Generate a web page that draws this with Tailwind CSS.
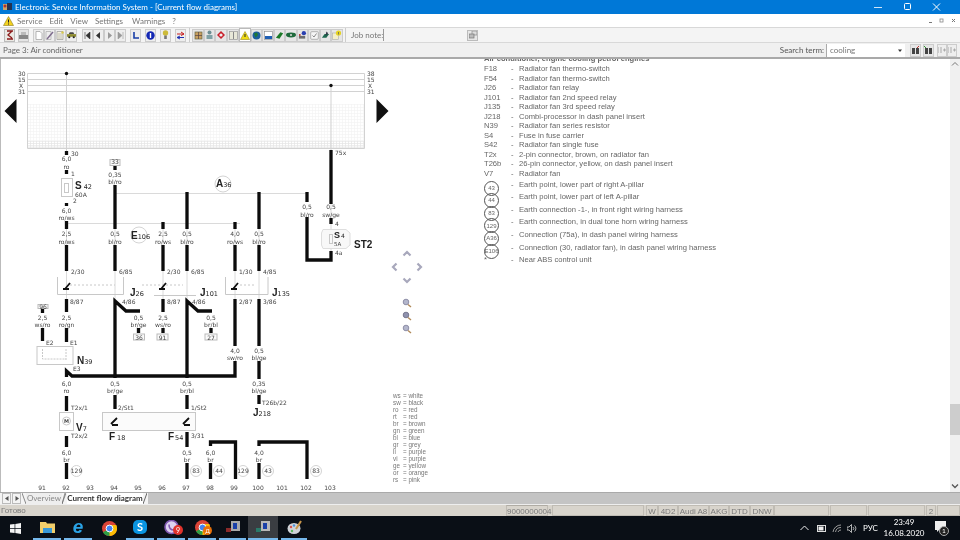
<!DOCTYPE html>
<html lang="en">
<head>
<meta charset="UTF-8">
<title>Electronic Service Information System</title>
<script src="https://cdn.jsdelivr.net/npm/@tailwindcss/browser@4"></script>
</head>
<body class="m-0 overflow-hidden bg-white">
<div class="w-[960px] h-[540px] flex flex-col overflow-hidden font-['Lato',sans-serif] text-[#555] blur-[0.35px]">

  <!-- title bar -->
  <div class="h-[14px] shrink-0 bg-[#0078d7] flex items-center text-white text-[8px]">
    <svg class="ml-[2px] mr-[1px]" width="11" height="10" viewBox="0 0 11 10"><rect x="1" y="2" width="4" height="6" fill="#c9a36a"/><rect x="5" y="1" width="5" height="7" fill="#23324f"/><circle cx="3" cy="4" r="1.5" fill="#a33"/></svg>
    <span class="ml-[1px] flex-1">Electronic Service Information System - [Current flow diagrams]</span>
    <svg width="75" height="14" viewBox="0 0 75 14" class="mr-[11px]"><path d="M0 7.5H8" stroke="#cfe4f7"/><rect x="30.5" y="3.5" width="6" height="6" rx="1" fill="none" stroke="#fff"/><path d="M59 3.5l7 7M66 3.5l-7 7" stroke="#fff"/></svg>
  </div>

  <!-- menu -->
  <div class="h-[13px] shrink-0 bg-white flex items-center text-[8px] text-[#777] relative">
    <svg class="ml-[3px]" width="11" height="10" viewBox="0 0 11 10"><path d="M5.5 .5L10.5 9.5H.5Z" fill="#f4d21f" stroke="#8a7a20" stroke-width=".6"/><path d="M5.5 3.5V6.5M5.5 7.5V8.5" stroke="#222"/></svg>
    <span class="ml-[3px]">Service</span>
    <span class="ml-[7px]">Edit</span>
    <span class="ml-[7px]">View</span>
    <span class="ml-[7px]">Settings</span>
    <span class="ml-[9px]">Warnings</span>
    <span class="ml-[7px]">?</span>
    <svg class="ml-auto mr-[3px]" width="30" height="10" viewBox="0 0 30 10"><path d="M2 6.5H5" stroke="#777"/><rect x="13" y="3" width="3" height="3" fill="none" stroke="#888" stroke-width=".8"/><path d="M25 3l3 3M28 3l-3 3" stroke="#777"/></svg>
  </div>

  <!-- toolbar -->
  <div class="h-[16px] shrink-0 bg-[#f4f4f4] border-t border-[#d8d8d8] border-b flex items-center text-[8px]">
    <div class="ml-[4px] w-[11px] h-[13px] bg-[#ebe9e4] border border-[#bbb] flex items-center justify-center"><svg width="8" height="10" viewBox="0 0 8 10"><path d="M1 1H7M6 1L2 5L6 8M1 9H7" stroke="#8c1a1a" fill="none" stroke-width="1.3"/></svg></div>
    <div class="ml-[3px] w-[11px] h-[13px] bg-[#e5e5e5] border border-[#c8c8c8] flex items-center justify-center"><svg width="9" height="9" viewBox="0 0 9 9"><rect x="2" y="1" width="5" height="3" fill="#bbb"/><rect x="0" y="4" width="9" height="4" fill="#888"/></svg></div>
    <div class="ml-[4px] w-[11px] h-[13px] bg-[#eee] border border-[#ccc] flex items-center justify-center"><svg width="8" height="9" viewBox="0 0 8 9"><path d="M1 .5H5L7 2.5V8.5H1Z" fill="#fff" stroke="#999" stroke-width=".7"/></svg></div>
    <div class="w-[11px] h-[13px] bg-[#eee] border border-[#ccc] flex items-center justify-center"><svg width="9" height="9" viewBox="0 0 9 9"><path d="M1 .5H6V8.5H1Z" fill="#eee" stroke="#aaa" stroke-width=".7"/><path d="M2 8L8 1" stroke="#7d6a8c" stroke-width="1.4"/></svg></div>
    <div class="w-[11px] h-[13px] bg-[#eee] border border-[#ccc] flex items-center justify-center"><svg width="9" height="9" viewBox="0 0 9 9"><path d="M1 .5H7V8.5H1Z" fill="#f4f1df" stroke="#999" stroke-width=".7"/><path d="M2 3H6M2 5H6M2 7H6" stroke="#aaa" stroke-width=".7"/><circle cx="6.5" cy="1.5" r="1.2" fill="#d9c94e"/></svg></div>
    <div class="w-[11px] h-[13px] bg-[#eee] border border-[#ccc] flex items-center justify-center"><svg width="10" height="8" viewBox="0 0 10 8"><rect x="0" y="3" width="10" height="3" fill="#8c8a2e"/><path d="M2 3L3 1H7L8 3" fill="#444"/><circle cx="2.5" cy="6.5" r="1.2" fill="#222"/><circle cx="7.5" cy="6.5" r="1.2" fill="#222"/></svg></div>

    <div class="ml-[5px] w-[11px] h-[13px] bg-[#eee] border border-[#ccc] flex items-center justify-center"><svg width="7" height="7" viewBox="0 0 7 7"><path d="M1 0V7M6 0V7L2 3.5Z" fill="#333" stroke="#333" stroke-width=".6"/></svg></div>
    <div class="w-[11px] h-[13px] bg-[#eee] border border-[#ccc] flex items-center justify-center"><svg width="7" height="7" viewBox="0 0 7 7"><path d="M5 0V7L1 3.5Z" fill="#333"/></svg></div>
    <div class="w-[11px] h-[13px] bg-[#eee] border border-[#ccc] flex items-center justify-center"><svg width="7" height="7" viewBox="0 0 7 7"><path d="M2 0V7L6 3.5Z" fill="#999"/></svg></div>
    <div class="w-[11px] h-[13px] bg-[#eee] border border-[#ccc] flex items-center justify-center"><svg width="7" height="7" viewBox="0 0 7 7"><path d="M6 0V7M1 0V7L5 3.5Z" fill="#999" stroke="#999" stroke-width=".6"/></svg></div>

    <div class="ml-[4px] w-[11px] h-[13px] bg-[#eee] border border-[#ccc] flex items-center justify-center"><svg width="9" height="9" viewBox="0 0 9 9"><path d="M3 1V7H8" fill="none" stroke="#1a3fa8" stroke-width="1.6"/></svg></div>
    <div class="ml-[4px] w-[11px] h-[13px] bg-[#eee] border border-[#ccc] flex items-center justify-center"><svg width="9" height="9" viewBox="0 0 9 9"><circle cx="4.5" cy="4.5" r="4.2" fill="#1428b4"/><path d="M4.5 2V7" stroke="#fff" stroke-width="1.4"/></svg></div>
    <div class="ml-[4px] w-[11px] h-[13px] bg-[#eee] border border-[#ccc] flex items-center justify-center"><svg width="7" height="10" viewBox="0 0 7 10"><circle cx="3.5" cy="3" r="2.7" fill="#cdbb3a"/><rect x="2.2" y="5.5" width="2.6" height="3.5" fill="#777"/></svg></div>
    <div class="ml-[4px] w-[11px] h-[13px] bg-[#eee] border border-[#ccc] flex items-center justify-center"><svg width="9" height="9" viewBox="0 0 9 9"><path d="M1 3H8M5 1L8 3L5 4.5" stroke="#c81e1e" fill="none"/><path d="M8 6.5H1M4 5L1 6.5L4 8" stroke="#2030b0" fill="none"/></svg></div>

    <div class="ml-[3px] w-[2px] h-[14px] border-l border-[#ccc]"></div>
    <div class="ml-[1px] w-[12px] h-[13px] bg-[#e6e6e6] border border-[#ccc] flex items-center justify-center"><svg width="9" height="9" viewBox="0 0 9 9"><rect x="1" y="1" width="7" height="7" fill="#c9a060" stroke="#664" stroke-width=".7"/><path d="M1 4.5H8M4.5 1V8" stroke="#544" stroke-width=".7"/></svg></div>
    <div class="w-[11px] h-[13px] bg-[#e6e6e6] border border-[#ccc] flex items-center justify-center"><svg width="9" height="10" viewBox="0 0 9 10"><circle cx="4.5" cy="2.5" r="2" fill="#6d8f93"/><rect x="1.5" y="5" width="6" height="4" fill="#7fa2a6"/></svg></div>
    <div class="w-[12px] h-[13px] bg-[#e6e6e6] border border-[#ccc] flex items-center justify-center"><svg width="10" height="9" viewBox="0 0 10 9"><path d="M1 4L5 0L9 4L5 8Z" fill="#c81e2a"/><circle cx="5" cy="4" r="1.6" fill="#eee"/></svg></div>
    <div class="w-[12px] h-[13px] bg-[#e6e6e6] border border-[#ccc] flex items-center justify-center"><svg width="9" height="9" viewBox="0 0 9 9"><rect x=".5" y=".5" width="8" height="8" fill="#e8e8d8" stroke="#999" stroke-width=".7"/><path d="M4.5 1V8" stroke="#888"/></svg></div>
    <div class="w-[12px] h-[14px] bg-white border border-[#bbb] flex items-center justify-center"><svg width="10" height="9" viewBox="0 0 10 9"><path d="M5 .5L9.5 8.5H.5Z" fill="#f0dc14" stroke="#9a8a20" stroke-width=".6"/><path d="M5 3V6" stroke="#222"/></svg></div>
    <div class="w-[11px] h-[13px] bg-[#e6e6e6] border border-[#ccc] flex items-center justify-center"><svg width="9" height="9" viewBox="0 0 9 9"><circle cx="4.5" cy="4.5" r="4" fill="#1c5f9c"/><path d="M2 2.5L5 1.5L6 4L3.5 6.5Z" fill="#1f7a33"/></svg></div>
    <div class="w-[12px] h-[13px] bg-[#e6e6e6] border border-[#ccc] flex items-center justify-center"><svg width="9" height="9" viewBox="0 0 9 9"><rect x=".5" y=".5" width="8" height="8" fill="#fff" stroke="#888" stroke-width=".6"/><rect x="1" y="5" width="7" height="3" fill="#1f5fb4"/></svg></div>
    <div class="w-[11px] h-[13px] bg-[#e6e6e6] border border-[#ccc] flex items-center justify-center"><svg width="10" height="9" viewBox="0 0 10 9"><path d="M1 7L6 1L9 2L5 8Z" fill="#1c7a28"/></svg></div>
    <div class="w-[12px] h-[13px] bg-[#e6e6e6] border border-[#ccc] flex items-center justify-center"><svg width="10" height="6" viewBox="0 0 10 6"><ellipse cx="5" cy="3" rx="5" ry="2.4" fill="#1f6a3c"/><circle cx="5" cy="3" r="1" fill="#ddd"/></svg></div>
    <div class="w-[11px] h-[13px] bg-[#e6e6e6] border border-[#ccc] flex items-center justify-center"><svg width="10" height="10" viewBox="0 0 10 10"><circle cx="6.5" cy="3" r="2.4" fill="#2a3fb0"/><rect x="1" y="6" width="7" height="3" fill="#6d6d6d"/><circle cx="2" cy="5" r="1" fill="#b02a2a"/></svg></div>
    <div class="w-[12px] h-[13px] bg-[#e6e6e6] border border-[#ccc] flex items-center justify-center"><svg width="9" height="9" viewBox="0 0 9 9"><rect x=".7" y=".7" width="7.6" height="7.6" rx="1" fill="#f5f5f5" stroke="#999" stroke-width=".7"/><path d="M2.5 4.5L4 6L6.5 2.5" stroke="#888" fill="none"/></svg></div>
    <div class="w-[11px] h-[13px] bg-[#e6e6e6] border border-[#ccc] flex items-center justify-center"><svg width="10" height="10" viewBox="0 0 10 10"><path d="M1 8L4 4H9L6 8Z" fill="#1f6a50"/><path d="M6 1L8 3L5 6Z" fill="#334"/></svg></div>
    <div class="w-[12px] h-[13px] bg-[#e6e6e6] border border-[#ccc] flex items-center justify-center"><svg width="10" height="10" viewBox="0 0 10 10"><rect x=".5" y="3" width="6" height="6.5" fill="#f4efc9" stroke="#aaa" stroke-width=".6"/><circle cx="6.5" cy="3" r="2.6" fill="#e6d320"/><path d="M6.5 2V4.5" stroke="#665" stroke-width=".8"/></svg></div>

    <div class="ml-[2px] w-[2px] h-[14px] border-l border-[#ccc]"></div>
    <span class="ml-[4px] w-[31px] whitespace-nowrap text-[#777]">Job note:</span>
    <div class="ml-[1px] w-px h-[12px] bg-[#999]"></div>
    <div class="ml-auto mr-[482px] w-[11px] h-[11px] bg-[#e6e6e6] border border-[#bbb] flex items-center justify-center"><svg width="8" height="8" viewBox="0 0 8 8"><rect x="3" y="0" width="5" height="4" fill="#ddd" stroke="#888" stroke-width=".7"/><rect x="0" y="3" width="5" height="4" fill="#bbb" stroke="#777" stroke-width=".7"/></svg></div>
  </div>

  <!-- page strip -->
  <div class="h-[16px] shrink-0 bg-[#f0f0f0] border-b-2 border-[#a9a9a9] flex items-center text-[8px] text-[#666]">
    <span class="ml-[3px]">Page 3: Air conditioner</span>
    <span class="ml-auto text-[#555]">Search term:</span>
    <div class="ml-[2px] w-[79px] h-[13px] bg-white border-l border-[#aaa] flex items-center justify-between">
      <span class="ml-[3px] text-[#777]">cooling</span>
      <svg class="mr-[2px]" width="6" height="6" viewBox="0 0 6 6"><path d="M1 2.5H5L3 5Z" fill="#333"/></svg>
    </div>
    <div class="ml-[5px] w-[11px] h-[13px] bg-[#e6e6e6] border border-[#ccc] flex items-center justify-center"><svg width="9" height="9" viewBox="0 0 9 9"><rect x="1" y="2" width="3" height="6" fill="#444"/><rect x="5" y="2" width="3" height="6" fill="#444"/><path d="M6 2L8 0" stroke="#b33"/></svg></div>
    <div class="ml-[2px] w-[11px] h-[13px] bg-[#e6e6e6] border border-[#ccc] flex items-center justify-center"><svg width="9" height="9" viewBox="0 0 9 9"><rect x="1" y="2" width="3" height="6" fill="#444"/><rect x="5" y="2" width="3" height="6" fill="#444"/><path d="M2 2L0 0" stroke="#393"/></svg></div>
    <div class="ml-[3px] w-[10px] h-[13px] bg-[#eee] border border-[#ccc] flex items-center justify-center"><svg width="8" height="8" viewBox="0 0 8 8"><path d="M3 1V7M5 4H8M6.5 2.5V5.5M0 1V7" stroke="#aaa" fill="none"/></svg></div>
    <div class="mr-[3px] w-[10px] h-[13px] bg-[#eee] border border-[#ccc] flex items-center justify-center"><svg width="8" height="8" viewBox="0 0 8 8"><path d="M3 1V7M5 4H8M6.5 2.5V5.5M0 1V7" stroke="#aaa" fill="none"/></svg></div>
  </div>

  <!-- main -->
  <div class="flex-1 min-h-0 flex bg-white border-l border-[#bbb]">
    <svg class="shrink-0 w-[473px] h-[432px] font-['DejaVu_Sans',sans-serif]" viewBox="1 60 473 432">
      <defs>
        <pattern id="dots" width="3" height="3" patternUnits="userSpaceOnUse"><path d="M0 .5H3M.5 0V3" stroke="#f2f2f2" stroke-width=".6"/></pattern>
        <pattern id="dots-dense" width="3" height="2" patternUnits="userSpaceOnUse"><path d="M0 .5H3M.5 0V2" stroke="#e4e4e4" stroke-width=".6"/></pattern>
      </defs>

      <!-- bus area -->
      <rect x="28" y="105" width="336" height="44" fill="url(#dots)"/>
      <rect x="28" y="142" width="336" height="7" fill="url(#dots-dense)"/>
      <path d="M27.5 74.5H364.5V149.5H27.5ZM28 80.5H364M28 86.5H364M28 92.5H364" fill="none" stroke="#d2d2d2"/>
      <path d="M66.5 75V152M331 87V152" stroke="#d2d2d2"/>
      <circle cx="66.5" cy="74.5" r="1.7" fill="#111"/>
      <circle cx="331" cy="86.5" r="1.7" fill="#111"/>
      <g font-size="6" fill="#444">
        <text x="18" y="77">30</text><text x="18" y="83">15</text><text x="19" y="89">X</text><text x="18" y="95">31</text>
        <text x="367" y="77">38</text><text x="367" y="83">15</text><text x="368" y="89">X</text><text x="367" y="95">31</text>
      </g>

      <!-- page arrows -->
      <path d="M16.5 100V124L4.5 112Z M376.5 100V124L388.5 112Z" fill="#111"/>

      <!-- thin lines -->
      <path d="M115 194.5H307M66.5 224.5H240M66.5 230V300M115 230V300M163 230V300M187 230V300M235 230V300M259 230V300M331 205V252" stroke="#dadada" fill="none"/>

      <!-- heavy wires -->
      <g stroke="#0c0c0c" stroke-width="3.3" fill="none" stroke-linejoin="miter">
        <path d="M66.5 152V156M66.5 171V175M66.5 204V207M66.5 222V230M66.5 246V272"/>
        <path d="M115 166V171M115 186V230M115 246V272"/>
        <path d="M163 223V230M163 246V272M187 193V230M187 246V272"/>
        <path d="M235 223V230M235 246V272M259 193V230M259 246V272"/>
        <path d="M307 193V203M307 218V261H331V252M331 151V205M331 219V225"/>
        <path d="M66.5 300V313M66.5 329V343M42.5 310V314M42.5 329V342"/>
        <path d="M66.5 378V372L72 377H235V362M115 379V302L126 312H140M187 379V302L198 312H212"/>
        <path d="M138.5 329V334M163 300V313M163 329V334M211 329V334"/>
        <path d="M235 300V347M259 300V347M259 362V380M259 396V405"/>
        <path d="M66.5 397V412M66.5 437V448M66.5 464V480"/>
        <path d="M115 396V410M187 396V410M187 433V448M187 464V480"/>
        <path d="M210.5 464V480M235.5 480V443H210.5V447M259 464V480M307 480V443H259V447"/>
      </g>

      <!-- fuses and component boxes -->
      <g fill="none" stroke="#c8c8c8">
        <rect x="61.5" y="179.5" width="11" height="18"/><rect x="64.5" y="184.5" width="4" height="9"/>
        <path d="M323 230.5H346L350 234V246L346 249.5H323L321.5 246V234Z" fill="#f8f8f8" stroke="#dedede"/>
        <rect x="329.5" y="235.5" width="3" height="9"/>
        <path d="M57.5 278V295.5H123.5V278M154 296.5H196M225.5 278V295.5H268V278"/>
        <path d="M70 286H115M142 286H183M240 286H255" stroke-dasharray="2 2"/>
        <rect x="37" y="347.5" width="36" height="18"/>
        <path d="M42.5 350V360H66M66 350V362" stroke-dasharray="2 1"/>
        <rect x="59.5" y="413.5" width="14" height="18"/>
        <circle cx="66.5" cy="422" r="4"/>
        <rect x="102.5" y="413.5" width="93" height="18" fill="#fbfbfb"/>
      </g>
      <g stroke="#111" stroke-width="1.8" fill="none">
        <path d="M63 290H69M70 284L65 290"/><path d="M159 290H165M166 284L161 290"/><path d="M231 290H237M238 284L233 290"/>
        <path d="M111 425L117 419M112 426H118"/><path d="M183 425L189 419M184 426H190"/>
      </g>

      <!-- small boxed references -->
      <g fill="#fafafa" stroke="#bbb">
        <rect x="110" y="160.5" width="10" height="6"/><rect x="38" y="305.5" width="10" height="4"/>
        <rect x="133.5" y="335" width="11" height="6"/><rect x="157" y="335" width="11" height="6"/><rect x="205" y="335" width="12" height="6"/>
      </g>

      <!-- circles -->
      <g fill="#fff" stroke="#d4d4d4">
        <circle cx="223" cy="185" r="8"/><circle cx="139" cy="236" r="8"/>
        <circle cx="76.5" cy="472" r="5.5"/><circle cx="196" cy="472" r="5.5"/><circle cx="219" cy="472" r="5.5"/>
        <circle cx="243" cy="472" r="5.5"/><circle cx="268" cy="472" r="5.5"/><circle cx="316" cy="472" r="5.5"/>
      </g>

      <!-- wire sizes and colours -->
      <g font-size="6" fill="#444" text-anchor="middle">
        <text x="66.5" y="161.5">6,0</text><text x="66.5" y="169.5">ro</text>
        <text x="115" y="177.5">0,35</text><text x="115" y="184.5">bl/ro</text>
        <text x="66.5" y="213.5">6,0</text><text x="66.5" y="220.5">ro/ws</text>
        <text x="66.5" y="236.5">2,5</text><text x="66.5" y="244.5">ro/ws</text>
        <text x="115" y="236.5">0,5</text><text x="115" y="244.5">bl/ro</text>
        <text x="163" y="236.5">2,5</text><text x="163" y="244.5">ro/ws</text>
        <text x="187" y="236.5">0,5</text><text x="187" y="244.5">bl/ro</text>
        <text x="235" y="236.5">4,0</text><text x="235" y="244.5">ro/ws</text>
        <text x="259" y="236.5">0,5</text><text x="259" y="244.5">bl/ro</text>
        <text x="307" y="209.5">0,5</text><text x="307" y="217.5">bl/ro</text>
        <text x="331" y="209.5">0,5</text><text x="331" y="217.5">sw/ge</text>
        <text x="42.5" y="320.5">2,5</text><text x="42.5" y="328">ws/ro</text>
        <text x="66.5" y="320.5">2,5</text><text x="66.5" y="328">ro/gn</text>
        <text x="138.5" y="320.5">0,5</text><text x="138.5" y="328">br/ge</text>
        <text x="163" y="320.5">2,5</text><text x="163" y="328">ws/ro</text>
        <text x="211" y="320.5">0,5</text><text x="211" y="328">br/bl</text>
        <text x="235" y="353.5">4,0</text><text x="235" y="361">sw/ro</text>
        <text x="259" y="353.5">0,5</text><text x="259" y="361">bl/ge</text>
        <text x="66.5" y="386.5">6,0</text><text x="66.5" y="394">ro</text>
        <text x="115" y="386.5">0,5</text><text x="115" y="394">br/ge</text>
        <text x="187" y="386.5">0,5</text><text x="187" y="394">br/bl</text>
        <text x="259" y="386.5">0,35</text><text x="259" y="394">bl/ge</text>
        <text x="66.5" y="455.5">6,0</text><text x="66.5" y="462.5">br</text>
        <text x="187" y="455.5">0,5</text><text x="187" y="462.5">br</text>
        <text x="210.5" y="455.5">6,0</text><text x="210.5" y="462.5">br</text>
        <text x="259" y="455.5">4,0</text><text x="259" y="462.5">br</text>
        <text x="115" y="165">33</text><text x="43" y="310">96</text>
        <text x="139" y="340.5">36</text><text x="162.5" y="340.5">91</text><text x="211" y="340.5">27</text>
        <text x="76.5" y="474">129</text><text x="196" y="474">83</text><text x="219" y="474">44</text>
        <text x="243" y="474">129</text><text x="268" y="474">43</text><text x="316" y="474">83</text>
        <text x="66.5" y="424" font-weight="bold" font-size="5">M</text>
        <text x="42" y="491">91</text><text x="66" y="491">92</text><text x="90" y="491">93</text><text x="114" y="491">94</text><text x="138" y="491">95</text><text x="162" y="491">96</text><text x="186" y="491">97</text><text x="210" y="491">98</text><text x="234" y="491">99</text><text x="258" y="491">100</text><text x="282" y="491">101</text><text x="306" y="491">102</text><text x="330" y="491">103</text>
      </g>

      <!-- pin labels -->
      <g font-size="6" fill="#444">
        <text x="71" y="156.5">30</text><text x="71" y="176.5">1</text><text x="73" y="203.5">2</text>
        <text x="335" y="156">75x</text><text x="335" y="227">4</text><text x="335" y="256">4a</text>
        <text x="71" y="275">2/30</text><text x="119" y="275">6/85</text><text x="167" y="275">2/30</text><text x="191" y="275">6/85</text><text x="239" y="275">1/30</text><text x="263" y="275">4/85</text>
        <text x="70" y="304.5">8/87</text><text x="122" y="304.5">4/86</text><text x="167" y="304.5">8/87</text><text x="192" y="304.5">4/86</text><text x="239" y="304.5">2/87</text><text x="263" y="304.5">3/86</text>
        <text x="46" y="345.5">E2</text><text x="70" y="345.5">E1</text><text x="73" y="371.5">E3</text>
        <text x="71" y="410.5">T2x/1</text><text x="71" y="439">T2x/2</text>
        <text x="118" y="410.5">2/St1</text><text x="191" y="410.5">1/St2</text><text x="191" y="439">3/31</text>
        <text x="262" y="405.5">T26b/22</text>
      </g>

      <!-- component names -->
      <g font-family="'Liberation Sans', sans-serif" font-weight="bold" font-size="10" fill="#222">
        <text x="75" y="190">S<tspan font-size="6.5" font-weight="normal" dx="2" font-family="'DejaVu Sans', sans-serif">42</tspan></text>
        <text x="216" y="188">A<tspan font-size="6.5" font-weight="normal" font-family="'DejaVu Sans', sans-serif">36</tspan></text>
        <text x="131" y="240">E<tspan font-size="6.5" font-weight="normal" font-family="'DejaVu Sans', sans-serif">106</tspan></text>
        <text x="334" y="238.5" font-size="9">S<tspan font-size="6" font-weight="normal" dx="1" font-family="'DejaVu Sans', sans-serif">4</tspan></text>
        <text x="354" y="249">ST2</text>
        <text x="130" y="297">J<tspan font-size="6.5" font-weight="normal" font-family="'DejaVu Sans', sans-serif">26</tspan></text>
        <text x="200" y="297">J<tspan font-size="6.5" font-weight="normal" font-family="'DejaVu Sans', sans-serif">101</tspan></text>
        <text x="272" y="297">J<tspan font-size="6.5" font-weight="normal" font-family="'DejaVu Sans', sans-serif">135</tspan></text>
        <text x="77" y="365">N<tspan font-size="6.5" font-weight="normal" font-family="'DejaVu Sans', sans-serif">39</tspan></text>
        <text x="76" y="432">V<tspan font-size="6.5" font-weight="normal" font-family="'DejaVu Sans', sans-serif">7</tspan></text>
        <text x="109" y="441">F<tspan font-size="6.5" font-weight="normal" dx="2" font-family="'DejaVu Sans', sans-serif">18</tspan></text>
        <text x="168" y="441">F<tspan font-size="6.5" font-weight="normal" dx="1" font-family="'DejaVu Sans', sans-serif">54</tspan></text>
        <text x="253" y="417">J<tspan font-size="6.5" font-weight="normal" font-family="'DejaVu Sans', sans-serif">218</tspan></text>
      </g>
      <g font-size="6" fill="#444"><text x="75" y="198">60A</text><text x="334" y="247" font-size="5.5">5A</text></g>

      <!-- pan and zoom controls -->
      <g fill="none" stroke="#a8a8bc" stroke-width="2.2">
        <path d="M403.5 256.5L407 253L410.5 256.5M403.5 279.5L407 283L410.5 279.5M396.5 264.5L393 268L396.5 271.5M417.5 264.5L421 268L417.5 271.5"/>
      </g>
      <g>
        <circle cx="406" cy="303" r="2.8" fill="#b3b6cc" stroke="#8f8fa8"/><path d="M408 305.5L411 308" stroke="#b08a5a" stroke-width="1.4"/>
        <circle cx="406" cy="316" r="2.8" fill="#8f92ae" stroke="#77778f"/><path d="M408 318.5L411 321" stroke="#b08a5a" stroke-width="1.4"/>
        <circle cx="406" cy="329" r="2.8" fill="#b3b6cc" stroke="#8f8fa8"/><path d="M408 331.5L411 334" stroke="#b08a5a" stroke-width="1.4"/>
      </g>

      <!-- colour key -->
      <g font-family="'Liberation Sans', sans-serif" font-size="6.3" fill="#777">
        <text x="393" y="398.5">ws</text><text x="403" y="398.5">= white</text>
        <text x="393" y="405.5">sw</text><text x="403" y="405.5">= black</text>
        <text x="393" y="412.5">ro</text><text x="403" y="412.5">= red</text>
        <text x="393" y="419.5">rt</text><text x="403" y="419.5">= red</text>
        <text x="393" y="426.5">br</text><text x="403" y="426.5">= brown</text>
        <text x="393" y="433.5">gn</text><text x="403" y="433.5">= green</text>
        <text x="393" y="440.5">bl</text><text x="403" y="440.5">= blue</text>
        <text x="393" y="447.5">gr</text><text x="403" y="447.5">= grey</text>
        <text x="393" y="454.5">li</text><text x="403" y="454.5">= purple</text>
        <text x="393" y="461.5">vi</text><text x="403" y="461.5">= purple</text>
        <text x="393" y="468.5">ge</text><text x="403" y="468.5">= yellow</text>
        <text x="393" y="475.5">or</text><text x="403" y="475.5">= orange</text>
        <text x="393" y="482.5">rs</text><text x="403" y="482.5">= pink</text>
      </g>
    </svg>

    <!-- parts list -->
    <div class="flex-1 overflow-hidden font-['Liberation_Sans',sans-serif] text-[7.6px] text-[#666]">
      <div class="flex flex-col ml-[10px] -mt-[5px]">
        <div class="h-[10px] leading-[10px] font-bold whitespace-nowrap">Air conditioner, engine cooling petrol engines</div>
        <div class="h-[9.55px] leading-[9.55px] flex"><span class="w-[27px]">F18</span><span class="w-[8px]">-</span><span>Radiator fan thermo-switch</span></div>
        <div class="h-[9.55px] leading-[9.55px] flex"><span class="w-[27px]">F54</span><span class="w-[8px]">-</span><span>Radiator fan thermo-switch</span></div>
        <div class="h-[9.55px] leading-[9.55px] flex"><span class="w-[27px]">J26</span><span class="w-[8px]">-</span><span>Radiator fan relay</span></div>
        <div class="h-[9.55px] leading-[9.55px] flex"><span class="w-[27px]">J101</span><span class="w-[8px]">-</span><span>Radiator fan 2nd speed relay</span></div>
        <div class="h-[9.55px] leading-[9.55px] flex"><span class="w-[27px]">J135</span><span class="w-[8px]">-</span><span>Radiator fan 3rd speed relay</span></div>
        <div class="h-[9.55px] leading-[9.55px] flex"><span class="w-[27px]">J218</span><span class="w-[8px]">-</span><span>Combi-processor in dash panel insert</span></div>
        <div class="h-[9.55px] leading-[9.55px] flex"><span class="w-[27px]">N39</span><span class="w-[8px]">-</span><span>Radiator fan series resistor</span></div>
        <div class="h-[9.55px] leading-[9.55px] flex"><span class="w-[27px]">S4</span><span class="w-[8px]">-</span><span>Fuse in fuse carrier</span></div>
        <div class="h-[9.55px] leading-[9.55px] flex"><span class="w-[27px]">S42</span><span class="w-[8px]">-</span><span>Radiator fan single fuse</span></div>
        <div class="h-[9.55px] leading-[9.55px] flex"><span class="w-[27px]">T2x</span><span class="w-[8px]">-</span><span>2-pin connector, brown, on radiator fan</span></div>
        <div class="h-[9.55px] leading-[9.55px] flex"><span class="w-[27px]">T26b</span><span class="w-[8px]">-</span><span>26-pin connector, yellow, on dash panel insert</span></div>
        <div class="h-[9.55px] leading-[9.55px] flex"><span class="w-[27px]">V7</span><span class="w-[8px]">-</span><span>Radiator fan</span></div>
        <div class="h-[12.6px] leading-[12.6px] flex"><span class="w-[27px]"><span class="inline-flex w-[15px] h-[15px] rounded-full border border-[#555] items-center justify-center text-[6px] mt-[2px]">43</span></span><span class="w-[8px]">-</span><span>Earth point, lower part of right A-pillar</span></div>
        <div class="h-[12.6px] leading-[12.6px] flex"><span class="w-[27px]"><span class="inline-flex w-[15px] h-[15px] rounded-full border border-[#555] items-center justify-center text-[6px] mt-[2px]">44</span></span><span class="w-[8px]">-</span><span>Earth point, lower part of left A-pillar</span></div>
        <div class="h-[12.6px] leading-[12.6px] flex"><span class="w-[27px]"><span class="inline-flex w-[15px] h-[15px] rounded-full border border-[#555] items-center justify-center text-[6px] mt-[2px]">83</span></span><span class="w-[8px]">-</span><span>Earth connection -1-, in front right wiring harness</span></div>
        <div class="h-[12.6px] leading-[12.6px] flex"><span class="w-[27px]"><span class="inline-flex w-[15px] h-[15px] rounded-full border border-[#555] items-center justify-center text-[6px] mt-[2px]">129</span></span><span class="w-[8px]">-</span><span>Earth connection, in dual tone horn wiring harness</span></div>
        <div class="h-[12.6px] leading-[12.6px] flex"><span class="w-[27px]"><span class="inline-flex w-[15px] h-[15px] rounded-full border border-[#555] items-center justify-center text-[6px] mt-[2px]">A36</span></span><span class="w-[8px]">-</span><span>Connection (75a), in dash panel wiring harness</span></div>
        <div class="h-[12.6px] leading-[12.6px] flex"><span class="w-[27px]"><span class="inline-flex w-[15px] h-[15px] rounded-full border border-[#555] items-center justify-center text-[6px] mt-[2px] whitespace-nowrap">E106</span></span><span class="w-[8px]">-</span><span>Connection (30, radiator fan), in dash panel wiring harness</span></div>
        <div class="h-[12.6px] leading-[12.6px] flex"><span class="w-[27px]">*</span><span class="w-[8px]">-</span><span>Near ABS control unit</span></div>
      </div>
    </div>

    <!-- scrollbar -->
    <div class="w-[10px] shrink-0 bg-[#f0f0f0] flex flex-col items-center">
      <svg class="mt-[2px]" width="8" height="6" viewBox="0 0 8 6"><path d="M1 4.5L4 1.5L7 4.5" stroke="#777" fill="none"/></svg>
      <div class="mt-[337px] w-full h-[31px] bg-[#cdcdcd]"></div>
      <svg class="mt-auto mb-[3px]" width="8" height="6" viewBox="0 0 8 6"><path d="M1 1.5L4 4.5L7 1.5" stroke="#555" fill="none" stroke-width="1.3"/></svg>
    </div>
  </div>

  <!-- sheet tabs -->
  <div class="h-[12px] shrink-0 flex text-[8px] bg-[#c4c4c4] border-t border-[#aaa]">
    <div class="w-[148px] bg-[#f4f4f4] flex items-stretch">
      <div class="ml-[2px] w-[9px] border border-[#bbb] flex items-center justify-center"><svg width="4" height="5" viewBox="0 0 4 5"><path d="M3.5 0V5L0 2.5Z" fill="#555"/></svg></div>
      <div class="ml-[1px] w-[9px] border border-[#bbb] flex items-center justify-center"><svg width="4" height="5" viewBox="0 0 4 5"><path d="M.5 0V5L4 2.5Z" fill="#555"/></svg></div>
      <svg class="ml-[1px]" width="4" height="11" viewBox="0 0 4 11"><path d="M0 0L4 11" stroke="#888"/></svg>
      <span class="w-[36px] text-center leading-[11px] text-[#888] bg-[#eee]">Overview</span>
      <svg width="4" height="11" viewBox="0 0 4 11"><path d="M4 0L0 11M0 11L3 0" stroke="#666" stroke-width=".7"/></svg>
      <span class="ml-[1px] w-[76px] whitespace-nowrap leading-[11px] font-bold text-[#333] bg-white text-center">Current flow diagram</span>
      <svg width="4" height="11" viewBox="0 0 4 11"><path d="M4 0L0 11" stroke="#666"/></svg>
    </div>
  </div>

  <!-- status bar -->
  <div class="h-[12px] shrink-0 bg-[#d8d4cc] border-t border-[#eee] flex items-stretch text-[8px] leading-[11px] text-[#7a7a7a] font-['Liberation_Sans',sans-serif]">
    <span class="ml-[1px] w-[505px]">Готово</span>
    <span class="w-[42px] border border-[#c0bcb4] border-t-[#b0aca4] text-center">9000000004</span>
    <span class="ml-[4px] w-[92px] border border-[#c0bcb4]"></span>
    <span class="ml-[2px] w-[12px] border border-[#c0bcb4] text-center">W</span>
    <span class="w-[20px] border border-[#c0bcb4] text-center">4D2</span>
    <span class="w-[31px] border border-[#c0bcb4] text-center whitespace-nowrap">Audi A8</span>
    <span class="w-[20px] border border-[#c0bcb4] text-center">AKG</span>
    <span class="w-[21px] border border-[#c0bcb4] text-center">DTD</span>
    <span class="w-[24px] border border-[#c0bcb4] text-center">DNW</span>
    <span class="w-[55px] border border-[#c0bcb4]"></span>
    <span class="ml-[1px] w-[37px] border border-[#c0bcb4]"></span>
    <span class="ml-[1px] w-[57px] border border-[#c0bcb4]"></span>
    <span class="ml-[1px] w-[10px] border border-[#c0bcb4] text-center">2</span>
    <span class="ml-[1px] flex-1 border border-[#c0bcb4]"></span>
  </div>

  <!-- taskbar -->
  <div class="h-[24px] shrink-0 bg-[#0a0f16] flex items-stretch text-white">
    <div class="w-[30px] flex items-center justify-center"><svg width="11" height="11" viewBox="0 0 11 11"><path d="M0 1.6L4.6 1V5.2H0ZM5.3 .9L11 0V5.2H5.3ZM0 5.9H4.6V10L0 9.4ZM5.3 5.9H11V11L5.3 10.1Z" fill="#f4f4f4"/></svg></div>
    <div class="ml-[3px] w-[28px] border-b-2 border-[#76b9ed] flex items-center justify-center"><svg width="15" height="13" viewBox="0 0 15 13"><path d="M0 1H6L7 2.5H15V12H0Z" fill="#f2cf6b"/><rect x="3" y="7" width="9" height="5" fill="#3a9ad9"/></svg></div>
    <div class="ml-[3px] w-[28px] border-b-2 border-[#76b9ed] flex items-center justify-center"><span class="text-[19px] leading-[20px] font-bold italic text-[#2aa3e6] font-['Liberation_Sans',sans-serif]">e</span></div>
    <div class="ml-[3px] w-[28px] flex items-center justify-center"><svg width="15" height="15" viewBox="0 0 15 15"><circle cx="7.5" cy="7.5" r="7.5" fill="#db4437"/><path d="M7.5 7.5L1 11.2A7.5 7.5 0 0 0 7.5 15L11 8.5Z" fill="#2f9e44"/><path d="M7.5 4H14.2A7.5 7.5 0 0 1 7.5 15Z" fill="#fbbc05"/><circle cx="7.5" cy="7.5" r="3.4" fill="#4285f4" stroke="#fff"/></svg></div>
    <div class="ml-[3px] w-[28px] border-b-2 border-[#76b9ed] flex items-center justify-center"><span class="w-[14px] h-[14px] rounded-[5px] bg-[#0a94e0] text-white text-[11px] leading-[14px] text-center font-bold">S</span></div>
    <div class="ml-[3px] w-[28px] border-b-2 border-[#76b9ed] flex items-center justify-center relative"><svg width="15" height="15" viewBox="0 0 15 15"><circle cx="7.5" cy="7" r="6.5" fill="#ddd2f0" stroke="#7f58b0" stroke-width="1.6"/><path d="M5 4.5C5 8 7 10 10 10" stroke="#7f58b0" stroke-width="1.6" fill="none"/></svg><span class="absolute left-[16px] top-[9px] w-[10px] h-[10px] rounded-full bg-[#e0332c] text-[7px] leading-[10px] text-center">9</span></div>
    <div class="ml-[3px] w-[28px] border-b-2 border-[#76b9ed] flex items-center justify-center relative"><svg width="15" height="15" viewBox="0 0 15 15"><circle cx="7.5" cy="7.5" r="7.5" fill="#db4437"/><path d="M7.5 7.5L1 11.2A7.5 7.5 0 0 0 7.5 15L11 8.5Z" fill="#2f9e44"/><path d="M7.5 4H14.2A7.5 7.5 0 0 1 7.5 15Z" fill="#fbbc05"/><circle cx="7.5" cy="7.5" r="3.4" fill="#4285f4" stroke="#fff"/></svg><span class="absolute left-[15px] top-[10px] w-[9px] h-[9px] rounded-full bg-[#e8710a] text-[6px] leading-[9px] text-center">Д</span></div>
    <div class="ml-[3px] w-[27px] border-b-2 border-[#76b9ed] flex items-center justify-center"><svg width="16" height="14" viewBox="0 0 16 14"><rect x="6" y="1" width="9" height="10" fill="#a9a9a9"/><rect x="8" y="3" width="4" height="6" fill="#1a3fa8"/><rect x="1" y="8" width="5" height="4" fill="#8a2a2a"/></svg></div>
    <div class="ml-[2px] w-[30px] bg-[#3a3d42] border-b-2 border-[#76b9ed] flex items-center justify-center"><svg width="16" height="14" viewBox="0 0 16 14"><rect x="6" y="1" width="9" height="10" fill="#b8b8b8"/><rect x="8" y="3" width="4" height="6" fill="#1a3fa8"/><rect x="1" y="8" width="5" height="4" fill="#2a7a6a"/></svg></div>
    <div class="ml-[3px] w-[26px] border-b-2 border-[#76b9ed] flex items-center justify-center"><svg width="15" height="15" viewBox="0 0 15 15"><ellipse cx="7" cy="8.5" rx="6.5" ry="5.5" fill="#cfd3d8"/><circle cx="4" cy="7" r="1.2" fill="#d9534f"/><circle cx="7" cy="5.5" r="1.2" fill="#4a90d9"/><circle cx="5" cy="11" r="1.2" fill="#5cb85c"/><path d="M9 9L14 1" stroke="#c9964a" stroke-width="2"/></svg></div>

    <div class="ml-auto flex items-center text-[8px]">
      <svg width="9" height="6" viewBox="0 0 9 6"><path d="M.5 5L4.5 1L8.5 5" stroke="#eee" fill="none"/></svg>
      <svg class="ml-[8px]" width="10" height="7" viewBox="0 0 10 7"><rect x=".5" y=".5" width="8" height="6" fill="none" stroke="#ddd"/><rect x="1.5" y="1.5" width="5" height="4" fill="#eee"/></svg>
      <svg class="ml-[5px]" width="10" height="9" viewBox="0 0 10 9"><path d="M1 8A8 8 0 0 1 9 1M3.5 8A5.5 5.5 0 0 1 9 3.5M6 8A3 3 0 0 1 9 6" stroke="#999" fill="none"/></svg>
      <svg class="ml-[5px]" width="10" height="9" viewBox="0 0 10 9"><path d="M0 3H2L4.5 .5V8.5L2 6H0Z" fill="none" stroke="#ddd" stroke-width=".8"/><path d="M6 3A2 2 0 0 1 6 6M7.5 1.5A4 4 0 0 1 7.5 7.5" stroke="#ddd" fill="none" stroke-width=".8"/></svg>
      <span class="ml-[6px] w-[14px] text-[8px]">РУС</span>
      <div class="ml-[9px] w-[36px] flex flex-col items-center text-[8px] leading-[11px]"><span>23:49</span><span>16.08.2020</span></div>
      <div class="ml-[12px] mr-[12px] w-[14px] relative"><svg width="14" height="16" viewBox="0 0 14 16"><path d="M1 1H12V10H5L3 12V10H1Z" fill="#eee"/></svg><span class="absolute left-[5px] top-[6px] w-[10px] h-[10px] rounded-full bg-[#222] border border-[#aaa] text-[6.5px] leading-[8px] text-center">1</span></div>
    </div>
  </div>
</div>
</body>
</html>
